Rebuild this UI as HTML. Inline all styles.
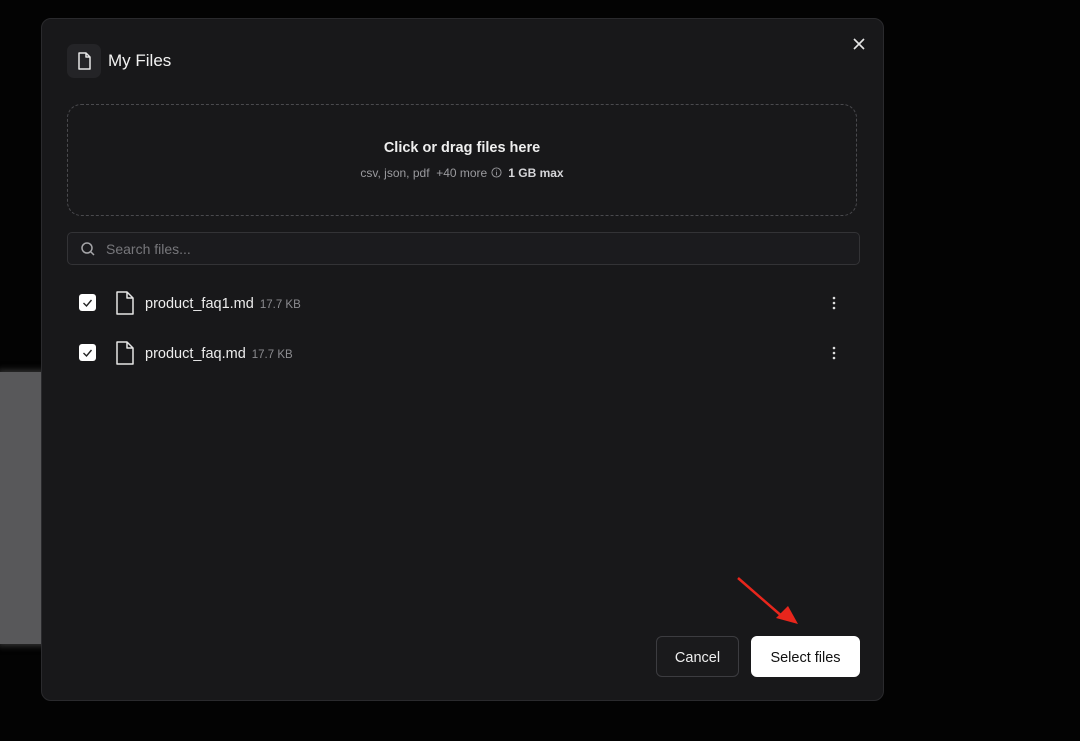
<!DOCTYPE html>
<html><head><meta charset="utf-8"><style>
*{box-sizing:border-box;margin:0;padding:0}
body{width:1080px;height:741px;background:#030303;position:relative;overflow:hidden;font-family:"Liberation Sans",sans-serif;color:#eee}
.bgpanel{position:absolute;left:0;top:372px;width:60px;height:272px;background:#58585a;box-shadow:0 0 6px 2px #333}
.modal{position:absolute;left:41px;top:18px;width:843px;height:683px;background:#18181a;border:1px solid #2a2a2d;border-radius:10px}
.hicon{position:absolute;left:25px;top:25px;width:34px;height:34px;background:#242427;border-radius:7px}
.title{position:absolute;left:66px;top:32px;font-size:17px;color:#f2f2f2}
.close{position:absolute;left:810px;top:18px}
.drop{position:absolute;left:25px;top:85px;width:790px;height:112px;border:1.5px dashed #4a4a4e;border-radius:14px;text-align:center}
.drop .a{margin-top:35px;font-size:14.5px;font-weight:bold;color:#eee}
.drop .b{margin-top:10px;font-size:12px;color:#9a9a9e}
.drop .b b{color:#d5d5d8}
.search{position:absolute;left:25px;top:213px;width:793px;height:33px;border:1px solid #333336;border-radius:5px;background:#1b1b1e}
.search span{position:absolute;left:38px;top:8px;font-size:14px;color:#77777b}
.row{position:absolute;left:37px;height:24px;width:770px}
.cb{position:absolute;left:0;top:3px;width:17px;height:17px;background:#fff;border-radius:3px}
.fi{position:absolute;left:36px;top:0}
.fn{position:absolute;left:66px;top:5px;font-size:14.5px;color:#ededed}
.sz{font-size:11.5px;color:#8c8c90;margin-left:6px}
.dots{position:absolute;left:752px;top:4px}
.btn{position:absolute;top:617px;height:41px;border-radius:6px;font-size:14.5px;display:flex;align-items:center;justify-content:center;padding-top:2px}
.cancel{left:614px;width:83px;border:1px solid #3c3c40;color:#eee;background:#1a1a1c}
.sel{left:709px;width:109px;background:#fff;color:#111;border:1px solid #fff}
</style></head><body>
<div class="bgpanel"></div>
<div class="modal">
 <div class="hicon"><svg width="34" height="34" viewBox="0 0 34 34"><path d="M12 9h7l4 4v12h-11z M19 9v4h4" fill="none" stroke="#e5e5e5" stroke-width="1.5" stroke-linejoin="round"/></svg></div>
 <div class="title">My Files</div>
 <svg class="close" width="14" height="14" viewBox="0 0 14 14"><path d="M2 2l10 10M12 2L2 12" stroke="#e5e5e5" stroke-width="1.6"/></svg>
 <div class="drop"><div class="a">Click or drag files here</div><div class="b">csv, json, pdf &nbsp;+40 more <svg width="11" height="11" viewBox="0 0 12 12" style="vertical-align:-1px"><circle cx="6" cy="6" r="5" fill="none" stroke="#9a9a9e"/><path d="M6 5v4M6 3v.8" stroke="#9a9a9e"/></svg> &nbsp;<b>1 GB max</b></div></div>
 <div class="search"><svg style="position:absolute;left:12px;top:8px" width="16" height="16" viewBox="0 0 16 16"><circle cx="7" cy="7" r="5" fill="none" stroke="#a5a5a8" stroke-width="1.5"/><path d="M11 11l3 3" stroke="#a5a5a8" stroke-width="1.5"/></svg><span>Search files...</span></div>
 <div class="row" style="top:272px"><div class="cb"><svg width="17" height="17" viewBox="0 0 17 17"><path d="M4.5 9l3 3 5-6" fill="none" stroke="#222" stroke-width="1.4"/></svg></div><svg class="fi" width="20" height="24" viewBox="0 0 20 24"><path d="M2 1h10l6 6v16H2z M12 1v6h6" fill="none" stroke="#e5e5e5" stroke-width="1.5" stroke-linejoin="round"/></svg><div class="fn">product_faq1.md<span class="sz">17.7 KB</span></div><svg class="dots" width="6" height="16" viewBox="0 0 6 16"><circle cx="3" cy="3" r="1.3" fill="#ddd"/><circle cx="3" cy="8" r="1.3" fill="#ddd"/><circle cx="3" cy="13" r="1.3" fill="#ddd"/></svg></div>
 <div class="row" style="top:322px"><div class="cb"><svg width="17" height="17" viewBox="0 0 17 17"><path d="M4.5 9l3 3 5-6" fill="none" stroke="#222" stroke-width="1.4"/></svg></div><svg class="fi" width="20" height="24" viewBox="0 0 20 24"><path d="M2 1h10l6 6v16H2z M12 1v6h6" fill="none" stroke="#e5e5e5" stroke-width="1.5" stroke-linejoin="round"/></svg><div class="fn">product_faq.md<span class="sz">17.7 KB</span></div><svg class="dots" width="6" height="16" viewBox="0 0 6 16"><circle cx="3" cy="3" r="1.3" fill="#ddd"/><circle cx="3" cy="8" r="1.3" fill="#ddd"/><circle cx="3" cy="13" r="1.3" fill="#ddd"/></svg></div>
 <svg style="position:absolute;left:690px;top:555px" width="70" height="55" viewBox="0 0 70 55"><path d="M6 4L52 44" stroke="#e8261c" stroke-width="2.5"/><path d="M66 50L44 44L56 32z" fill="#e8261c"/></svg>
 <div class="btn cancel">Cancel</div>
 <div class="btn sel">Select files</div>
</div>
</body></html>
